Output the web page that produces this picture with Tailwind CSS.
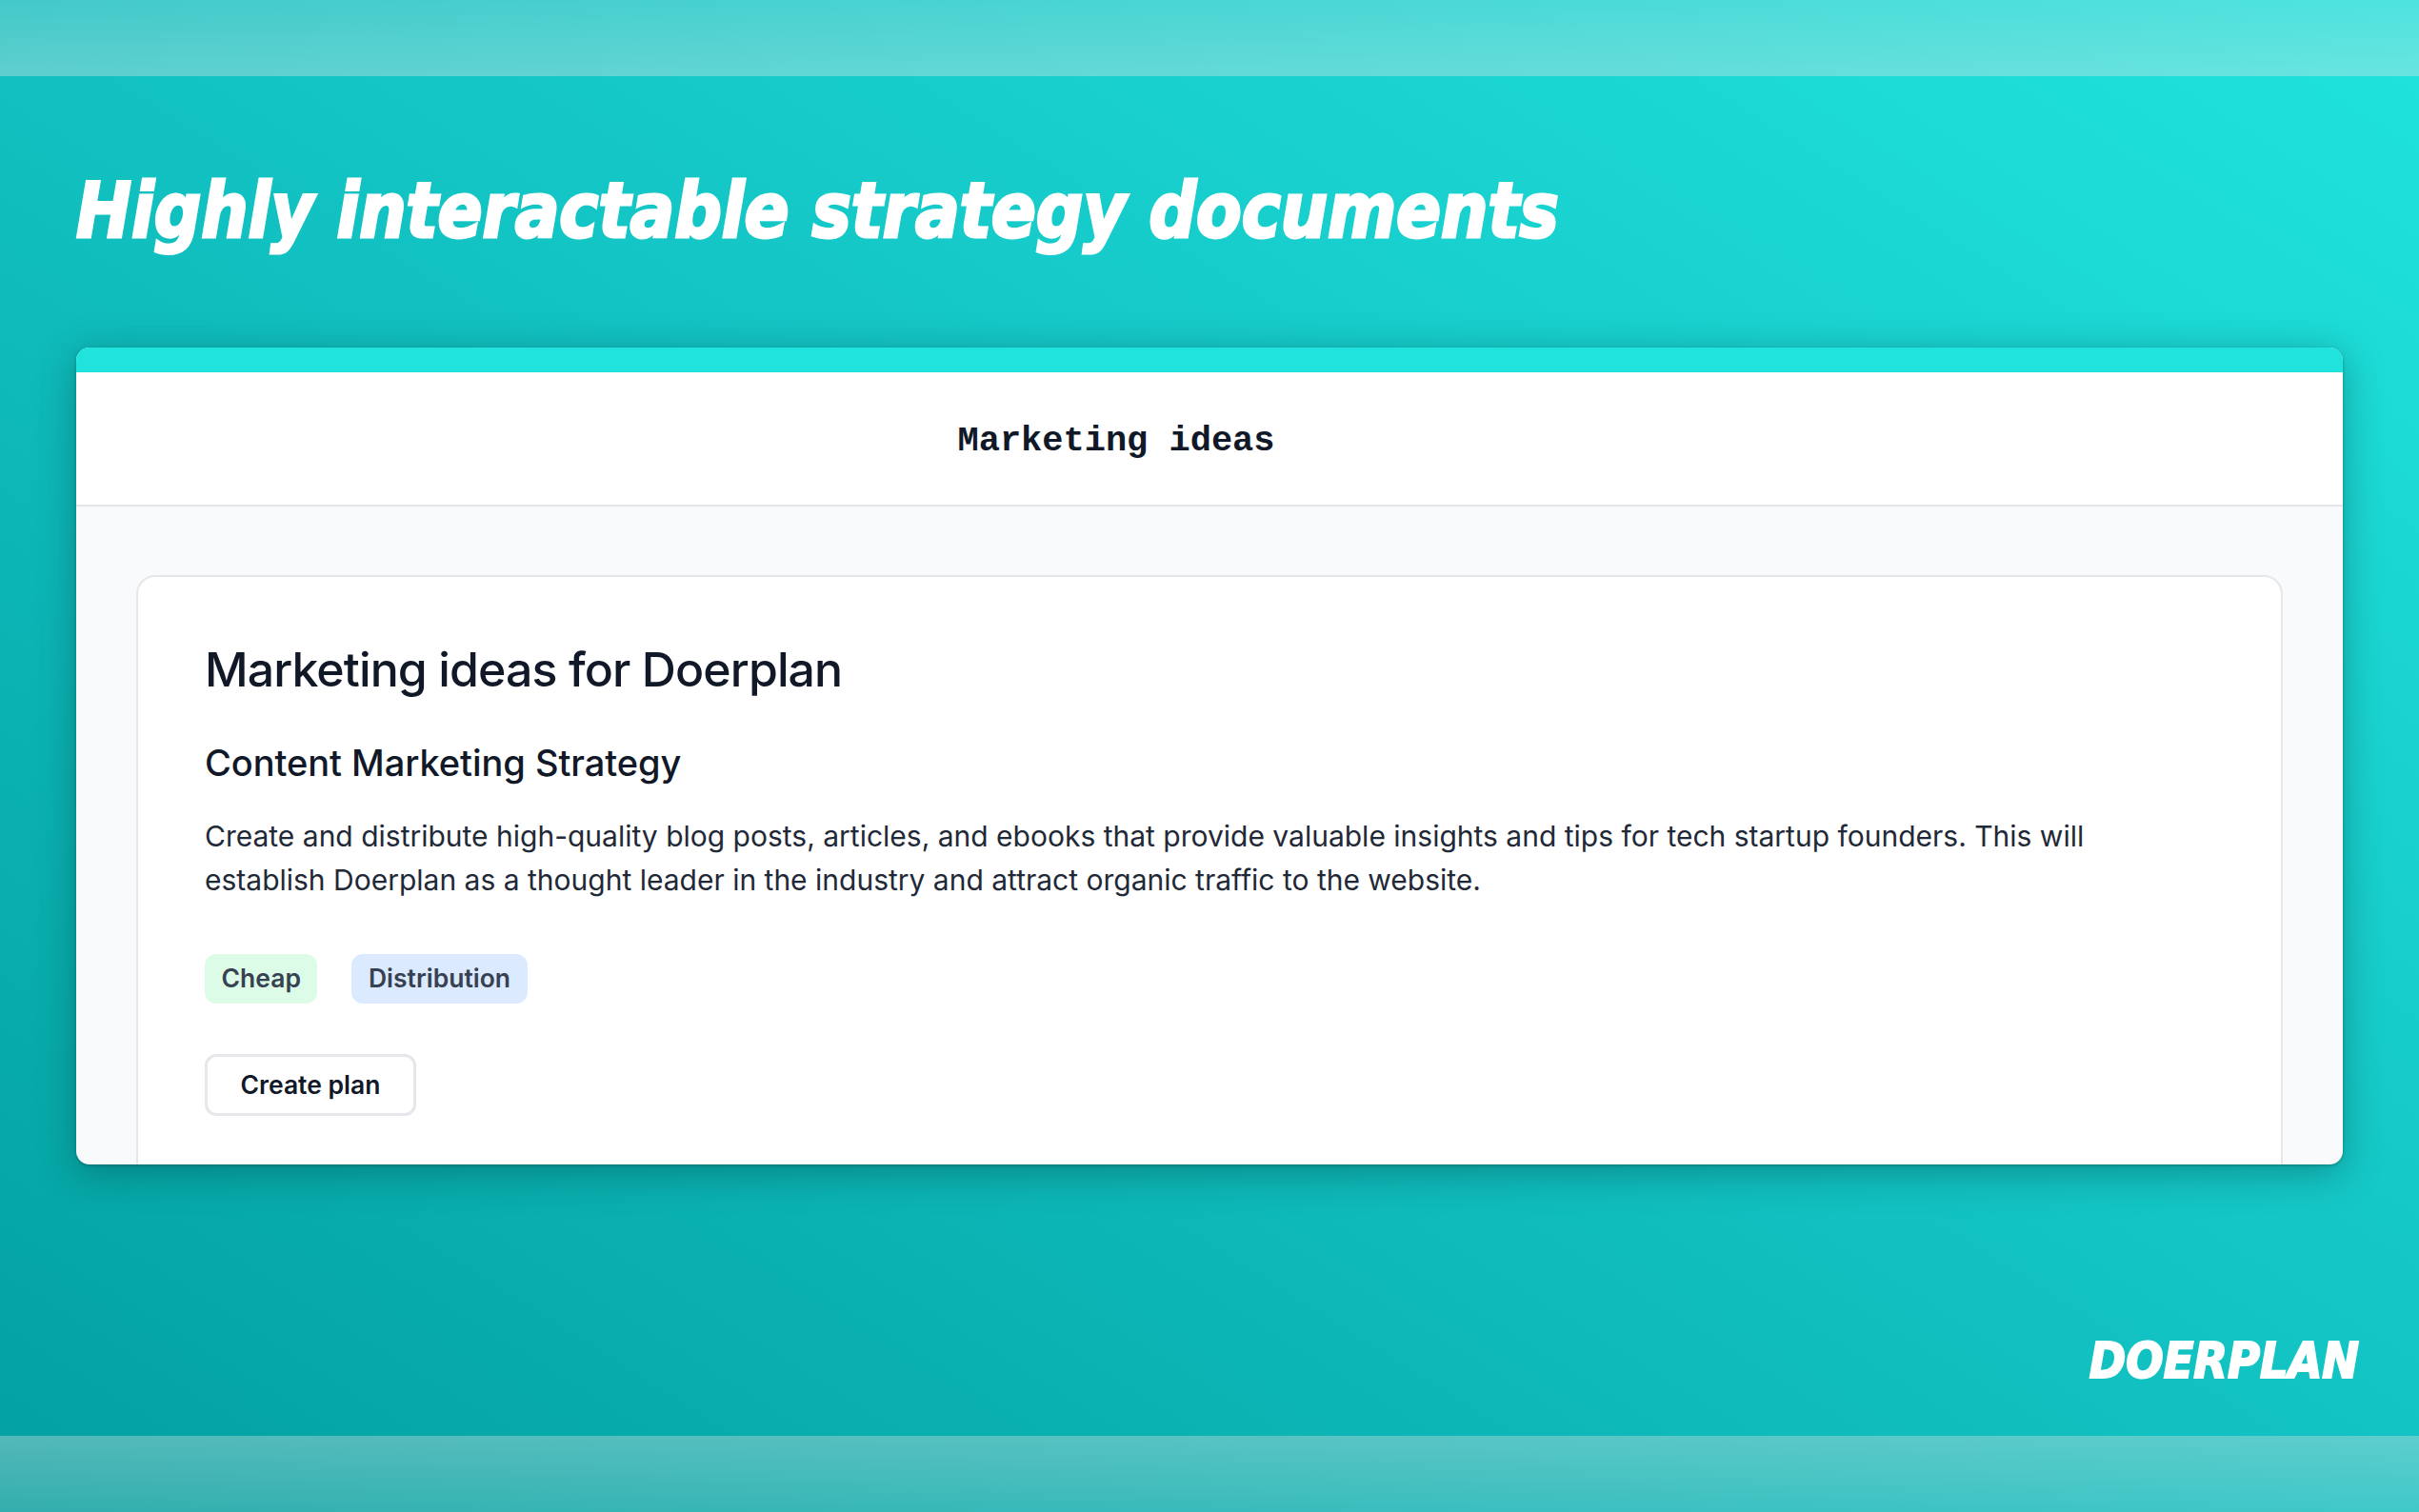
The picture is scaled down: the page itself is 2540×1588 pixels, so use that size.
<!DOCTYPE html>
<html lang="en">
<head>
    <meta charset="UTF-8">
    <title>Doerplan</title>
    <script src="https://cdn.jsdelivr.net/npm/@tailwindcss/browser@4"></script>
</head>
<body class="m-0 overflow-hidden">
    <div class="w-[2540px] h-[1588px] flex flex-col bg-linear-to-tr from-[#03a0a0] via-[#12c2c2] to-[#20e4de] font-['Inter',sans-serif]">
        <!-- Top band -->
        <div class="h-20 shrink-0 bg-linear-to-b from-[#e0e0e0]/24 to-[#e8e8e8]/36"></div>

        <main class="flex-1 flex flex-col px-20 min-h-0">
            <h1 class="h-[285px] shrink-0 pt-[91px] text-[81px] leading-[100px] font-bold italic text-white whitespace-nowrap origin-left scale-x-[0.95] [-webkit-text-stroke:3px_white] font-['DejaVu_Sans_Condensed','DejaVu_Sans',sans-serif]">Highly interactable strategy documents</h1>

            <!-- Document card -->
            <section class="h-[858px] shrink-0 rounded-[14px] overflow-hidden bg-[#f9fafb] flex flex-col shadow-[0_1px_3px_rgba(0,60,60,0.4),0_8px_40px_rgba(0,60,60,0.4)]">
                <div class="h-[26px] shrink-0 bg-[#20e3dd]"></div>
                <header class="h-[141px] shrink-0 bg-white border-b-2 border-[#e5e7eb] flex items-center justify-center pr-[196px] pt-[6px]">
                    <span class="text-[37px] font-bold text-[#111827] font-['Liberation_Mono',monospace]">Marketing ideas</span>
                </header>
                <div class="flex-1 min-h-0 px-[63px] pt-[72px]">
                    <article class="h-[700px] bg-white border-2 border-[#e5e7eb] rounded-[20px] px-[70px] pt-[62px]">
                        <h2 class="text-[50px] leading-[70px] font-medium tracking-[-0.9px] text-[#111827]">Marketing ideas for Doerplan</h2>
                        <h3 class="mt-[38px] text-[38px] leading-[50px] font-medium tracking-[-0.05px] text-[#111827]">Content Marketing Strategy</h3>
                        <p class="mt-[29px] text-[30px] leading-[46px] text-[#1f2937] w-[2040px]">Create and distribute high-quality blog posts, articles, and ebooks that provide valuable insights and tips for tech startup founders. This will establish Doerplan as a thought leader in the industry and attract organic traffic to the website.</p>
                        <div class="mt-[55px] flex gap-[36px]">
                            <span class="h-[52px] px-[17.5px] flex items-center rounded-[12px] bg-[#dcfce7] text-[26.5px] font-semibold text-[#374151]">Cheap</span>
                            <span class="h-[52px] px-[17.5px] flex items-center rounded-[12px] bg-[#dbeafe] text-[26.5px] font-semibold text-[#374151]">Distribution</span>
                        </div>
                        <button class="mt-[53px] h-[65px] w-[222px] flex items-center justify-center rounded-[12px] bg-white border-[3px] border-[#e5e7eb] text-[26.5px] font-semibold text-[#111827]">Create plan</button>
                    </article>
                </div>
            </section>

            <div class="flex-1 flex justify-end items-start pt-[176px] -mr-[17px]">
                <span class="text-[52px] leading-[60px] font-bold italic text-white origin-right scale-x-[0.99] [-webkit-text-stroke:2px_white] font-['DejaVu_Sans_Condensed','DejaVu_Sans',sans-serif]">DOERPLAN</span>
            </div>
        </main>

        <!-- Bottom band -->
        <div class="h-20 shrink-0 bg-linear-to-b from-[#e0e0e0]/36 to-[#e0e0e0]/22"></div>
    </div>
</body>
</html>
